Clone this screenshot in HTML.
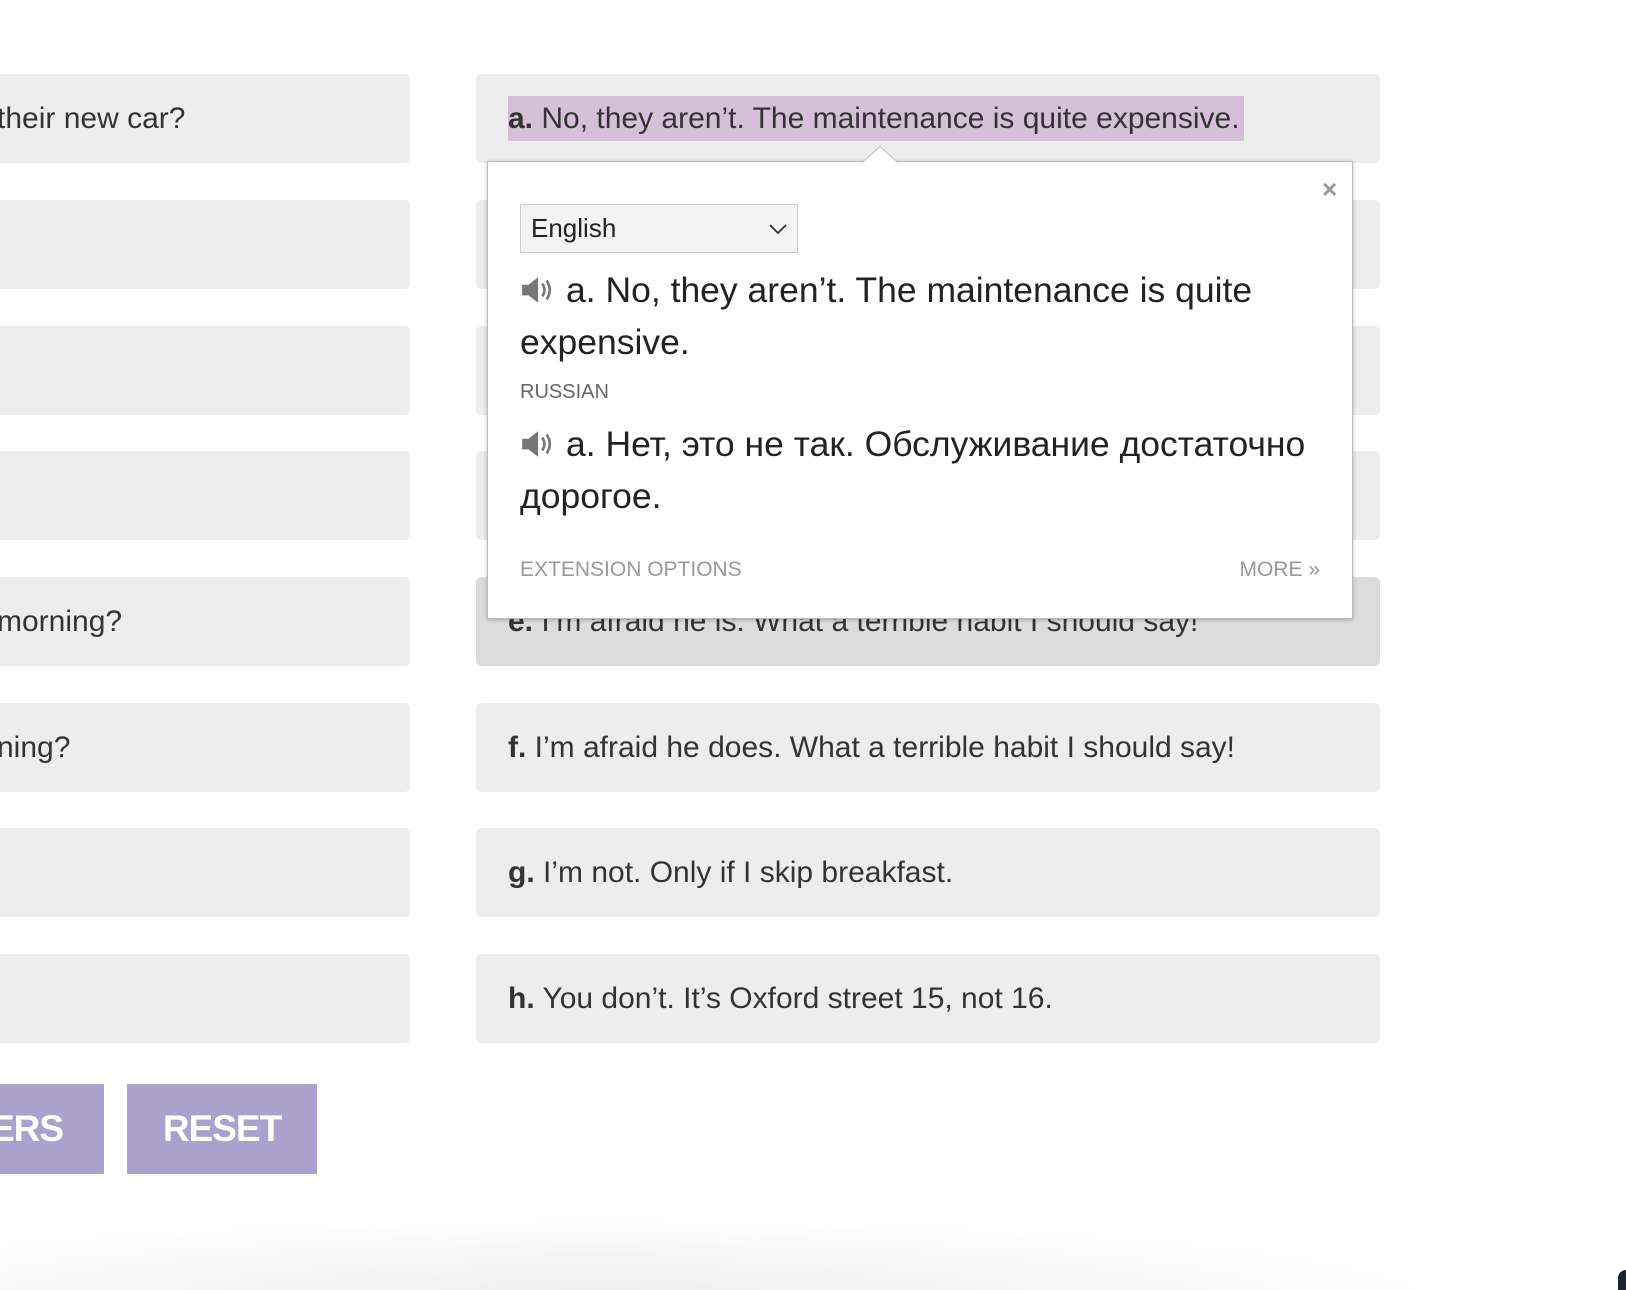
<!DOCTYPE html>
<html><head><meta charset="utf-8"><style>
body{margin:0;width:1626px;height:1290px;overflow:hidden;background:#fff;position:relative;font-family:"Liberation Sans",sans-serif;}
.b{position:absolute;background:#ededed;border-radius:5px;height:89px;}
.l{left:-10px;width:420px;}
.r{left:476px;width:904px;}
.t{position:absolute;font-size:30px;color:#333;white-space:nowrap;line-height:34px;}
.t b{font-weight:bold;}
.pop{position:absolute;left:487px;top:161px;width:864px;height:456px;background:#fff;border:1px solid #bbb;box-shadow:0 1px 4px rgba(0,0,0,.25);}
.pt{position:absolute;font-size:35.5px;color:#222;white-space:nowrap;}
.spk{display:inline-block;vertical-align:-3px;margin-right:12px;}
.btn{position:absolute;top:1084px;height:90px;background:#aaa2cc;color:#fff;font-weight:bold;font-size:37px;line-height:90px;letter-spacing:-1px;}
</style></head><body>
<div class="b l" style="top:74px"></div>
<div class="b l" style="top:200px"></div>
<div class="b l" style="top:326px"></div>
<div class="b l" style="top:451px"></div>
<div class="b l" style="top:577px"></div>
<div class="b l" style="top:703px"></div>
<div class="b l" style="top:828px"></div>
<div class="b l" style="top:954px"></div>
<div class="t" style="left:-3px;top:102px">their new car?</div>
<div class="t" style="left:-3px;top:605px">morning?</div>
<div class="t" style="left:-3px;top:731px">ning?</div>

<div class="b r" style="top:74px"></div>
<div class="b r" style="top:200px"></div>
<div class="b r" style="top:326px"></div>
<div class="b r" style="top:451px"></div>
<div class="b r" style="top:577px;background:#dcdcdc"></div>
<div class="b r" style="top:703px"></div>
<div class="b r" style="top:828px"></div>
<div class="b r" style="top:954px"></div>
<div style="position:absolute;left:508px;top:96px;width:736px;height:45px;background:#d6bfd8"></div>
<div class="t" style="left:508px;top:102px"><b>a.</b> No, they aren’t. The maintenance is quite expensive.</div>
<div class="t" style="left:508px;top:605px"><b>e.</b> I’m afraid he is. What a terrible habit I should say!</div>
<div class="t" style="left:508px;top:731px"><b>f.</b> I’m afraid he does. What a terrible habit I should say!</div>
<div class="t" style="left:508px;top:856px"><b>g.</b> I’m not. Only if I skip breakfast.</div>
<div class="t" style="left:508px;top:982px"><b>h.</b> You don’t. It’s Oxford street 15, not 16.</div>

<div class="pop">
<svg style="position:absolute;left:374px;top:-16px" width="36" height="17"><path d="M0 16.5 L18 0.5 L36 16.5" fill="#fff" stroke="#bbb"/></svg>
<div style="position:absolute;left:834px;top:12px;font-size:26px;color:#999;font-weight:bold">×</div>
<div style="position:absolute;left:32px;top:42px;width:278px;height:49px;border:1px solid #ccc;background:#f3f3f3;box-sizing:border-box;font-size:26px;line-height:47px;padding-left:10px;color:#222">English
<svg style="position:absolute;right:10px;top:18px" width="18" height="12"><path d="M1 2 L9 10 L17 2" fill="none" stroke="#333" stroke-width="1.8"/></svg></div>
<div class="pt" style="left:32px;top:102px;line-height:52px;white-space:normal;width:810px"><svg class="spk" width="34" height="30" viewBox="0 0 32 28"><path d="M2 9h6l9-7v24l-9-7H2z" fill="#777"/><path d="M21 8q4 6 0 12M25 5q6 9 0 18" stroke="#777" stroke-width="2.5" fill="none"/></svg>a. No, they aren’t. The maintenance is quite expensive.</div>
<div style="position:absolute;left:32px;top:219px;font-size:20px;color:#666">RUSSIAN</div>
<div class="pt" style="left:32px;top:256px;line-height:52px;white-space:normal;width:820px"><svg class="spk" width="34" height="30" viewBox="0 0 32 28"><path d="M2 9h6l9-7v24l-9-7H2z" fill="#777"/><path d="M21 8q4 6 0 12M25 5q6 9 0 18" stroke="#777" stroke-width="2.5" fill="none"/></svg>а. Нет, это не так. Обслуживание достаточно дорогое.</div>
<div style="position:absolute;left:32px;top:396px;font-size:21px;color:#999">EXTENSION OPTIONS</div>
<div style="position:absolute;right:32px;top:396px;font-size:21px;color:#999">MORE »</div>
</div>

<div class="btn" style="left:-10px;width:114px;text-align:right"><span style="margin-right:42px">ERS</span></div>
<div class="btn" style="left:127px;width:190px;text-align:center">RESET</div>
<div style="position:absolute;left:0;top:1215px;width:1626px;height:75px;background:radial-gradient(ellipse 900px 90px at 600px 90px,#ececec,rgba(255,255,255,0))"></div>
<div style="position:absolute;right:0;bottom:0;width:8px;height:20px;background:#1b2430;border-top-left-radius:8px"></div>
</body></html>
